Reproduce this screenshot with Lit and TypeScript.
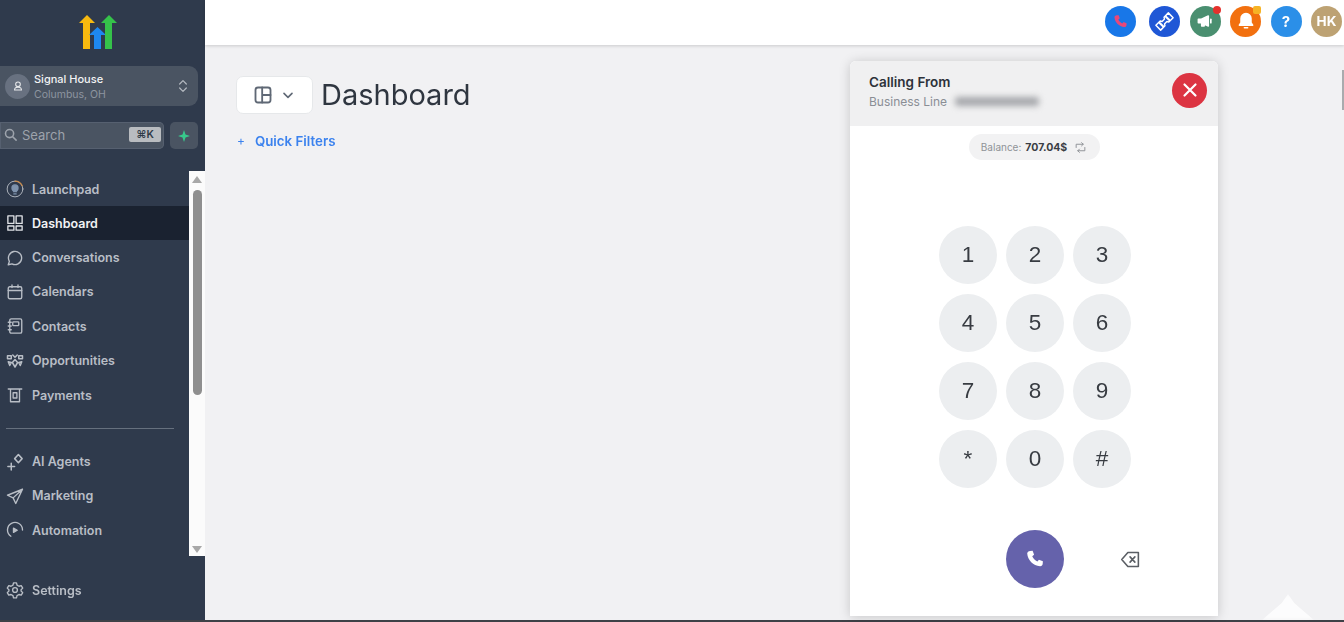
import { LitElement, html, css, svg } from "lit";
import { customElement } from "lit/decorators.js";

const ic = (body: unknown, size = 18) => html`<svg width=${size} height=${size} viewBox="0 0 24 24" fill="none" stroke="currentColor" stroke-width="1.8" stroke-linecap="round" stroke-linejoin="round">${body}</svg>`;

const PHONE = "M6.6 3.2 9.4 3l1.6 4.4-2 1.6c.9 2.4 3 4.600 5.600 5.800l1.700-2 4.300 1.700-.2 2.800c-.1 1.500-1.300 2.700-2.900 2.600C10 19.300 4.100 13.400 3.500 6.100 3.400 4.600 5.100 3.300 6.600 3.200Z";

const navIcons: Record<string, unknown> = {
  Launchpad: svg`<circle cx="12" cy="12" r="10.500" stroke-width="1.200"/><path d="M12 1.500a10.500 10.500 0 0 1 9.500 6" stroke="#c98a4a" stroke-width="1.600"/><circle cx="12" cy="10.500" r="4" fill="#7f93ad" stroke="#7f93ad"/><path d="M10 15.500h4M10.500 18.500h3" stroke="#7f93ad"/>`,
  Dashboard: svg`<rect x="2.500" y="2.500" width="8" height="10"/><rect x="13.500" y="2.500" width="8" height="10"/><rect x="2.500" y="16" width="8" height="5.500"/><rect x="13.500" y="16" width="8" height="5.500"/>`,
  Conversations: svg`<path d="M3 21l1.500-4.500A8.800 8.800 0 1 1 8 19.800Z"/>`,
  Calendars: svg`<rect x="3" y="5" width="18" height="16" rx="2"/><path d="M3 10h18M8 2.500V6M16 2.500V6"/>`,
  Contacts: svg`<rect x="5" y="2.500" width="16" height="19" rx="2"/><rect x="9" y="6.500" width="8" height="5" rx="1"/><path d="M3 7h4M3 12h4M3 17h4"/>`,
  Opportunities: svg`<path d="M2 5h5v4H2zM17 5h5v4h-5zM9 4l3 3 3-3M12 10l3.500 4-3.500 6-3.500-6ZM3 13l4 1-2 4ZM21 13l-4 1 2 4Z" stroke-width="2"/>`,
  Payments: svg`<path d="M3 4h18M6 4v17h12V4"/><rect x="9.500" y="9" width="5" height="7"/>`,
  "AI Agents": svg`<path d="M16.500 2l5 5.500-5 5.500-5-5.500ZM7 13.500v9M2.500 18h9" stroke-width="2"/>`,
  Marketing: svg`<path d="M22 3 2 11l7.500 3.500L13 22ZM22 3 9.500 14.500"/>`,
  Automation: svg`<path d="M6.500 20.300A10 10 0 1 1 22 12"/><path d="M10 9.500l5 2.800-5 2.800Z" fill="currentColor"/>`,
  Settings: svg`<circle cx="12" cy="12" r="3.200"/><path d="M10 2.500h4l.7 3 2.600 1.500 3-.9 2 3.400-2.200 2.100v1.800l2.200 2.100-2 3.400-3-.9-2.600 1.500-.7 3h-4l-.7-3-2.600-1.500-3 .9-2-3.400 2.200-2.100v-1.800L1.700 9.500l2-3.400 3 .9L9.300 5.500Z"/>`,
};

@customElement("app-root")
export class AppRoot extends LitElement {
  static styles = css`
    :host { display: block; width: 1344px; height: 622px; overflow: hidden; font-family: Inter, "Liberation Sans", sans-serif; }
    * { box-sizing: border-box; }
    .app { position: relative; display: flex; width: 100%; height: 622px; background: #f1f1f3; border-bottom: 2px solid #3e4147; filter: blur(.35px); }
    .side { width: 205px; flex: none; background: #2f3a4c; display: flex; flex-direction: column; color: #c4c8cf; }
    .logo { height: 66px; padding: 15px 0 0 79px; flex: none; }
    .loc { height: 40px; width: 198px; flex: none; border-radius: 0 9px 9px 0; background: #4a5462; display: flex; align-items: center; padding: 0 7px 0 5px; gap: 4px; }
    .av { width: 25px; height: 25px; border-radius: 50%; background: #687180; color: #e6e8ea; display: flex; align-items: center; justify-content: center; }
    .loctext { flex: 1; display: flex; flex-direction: column; gap: 2px; margin-top: 2px; }
    .ln { font-size: 11px; font-weight: 500; color: #f2f3f4; line-height: 14px; }
    .ls { font-size: 10.500px; color: #8d95a0; line-height: 14px; }
    .updown { display: flex; color: #b5bac1; }
    .srow { display: flex; gap: 6px; margin-top: 16px; height: 27px; flex: none; }
    .search { width: 164px; background: #4a5462; border-radius: 0 5px 5px 0; display: flex; align-items: center; padding: 0 3px 2px 3px; gap: 4px; color: #9da3ac; font-size: 13px; box-shadow: inset 0 0 0 1px #566070; }
    .stext { flex: 1; }
    .kbd { width: 32px; text-align: center; background: #b9bcc0; color: #2f3a48; font-size: 10.500px; font-weight: 600; padding: 1px 0; border-radius: 2px; line-height: 13px; }
    .plus { width: 28px; background: #4a5462; border-radius: 5px; display: flex; align-items: center; justify-content: center; }
    .navwrap { display: flex; margin-top: 22px; height: 385px; flex: none; }
    .nav { width: 189px; flex: none; padding-top: 1px; }
    .item { height: 34.400px; display: flex; align-items: center; gap: 8px; padding-left: 6px; font-size: 12.500px; font-weight: 600; color: #b9bec6; }
    .item svg { flex: none; }
    .item.on { background: #1a2230; color: #f1f2f4; height: 34px; }
    .item.on svg { color: #dfe2e6; }
    .div { height: 32px; display: flex; align-items: center; padding-left: 6px; padding-top: 1px; }
    .div i { display: block; width: 168px; height: 1px; background: #66707e; }
    .sb { width: 16px; flex: none; background: #fbfbfb; display: flex; flex-direction: column; align-items: center; padding-top: 5px; }
    .tri-u { width: 0; height: 0; border: 5.500px solid transparent; border-top: 0; border-bottom: 7px solid #a8a8a8; }
    .tri-d { width: 0; height: 0; border: 5.500px solid transparent; border-bottom: 0; border-top: 7px solid #a8a8a8; margin-top: auto; margin-bottom: 3px; }
    .thumb { width: 9px; height: 205px; background: #8f8f8f; border-radius: 5px; margin-top: 7px; }
    .set { margin-top: 17px; }
    .main { flex: 1; display: flex; flex-direction: column; min-width: 0; }
    .top { height: 45px; flex: none; background: #fff; box-shadow: 0 1px 3px rgba(0,0,0,.16); display: flex; align-items: center; justify-content: flex-end; gap: 9.500px; padding: 0 2px 3px 0; }
    .tb { position: relative; width: 31px; height: 31px; border-radius: 50%; display: flex; align-items: center; justify-content: center; color: #fff; flex: none; font-weight: 700; }
    .tk { margin-left: 3.500px; }
    .dot { position: absolute; top: 0; right: 0; width: 8px; height: 8px; border-radius: 50%; background: #e5322d; }
    .dot.y { background: #f6b325; border-radius: 2px; }
    .content { padding: 31px 31px; flex: 1; }
    .head { display: flex; align-items: center; gap: 8px; }
    .pick { width: 77px; height: 38px; background: #fff; border: 1px solid #e6e8ea; border-radius: 7px; display: flex; align-items: center; justify-content: center; gap: 7px; color: #5f6875; }
    h1 { margin: 0; font-size: 29px; font-weight: 400; color: #2f3640; line-height: 38px; }
    .qf { margin-top: 18px; display: flex; align-items: center; gap: 10px; padding-left: 1px; color: #3b82ee; font-size: 13.300px; font-weight: 600; line-height: 18px; }
    .qf span:first-child { font-weight: 400; font-size: 12px; }
    .panel { position: absolute; left: 850px; top: 61px; width: 368px; height: 555px; background: #fff; border-radius: 6px 6px 0 0; box-shadow: 0 1px 12px rgba(0,0,0,.18); display: flex; flex-direction: column; align-items: center; }
    .ph { width: 100%; height: 65px; flex: none; background: #f0f0f1; border-radius: 6px 6px 0 0; display: flex; align-items: center; justify-content: space-between; padding: 0 11px 3px 19px; }
    .close { margin-bottom: 4px; }
    .cf { font-size: 13.500px; font-weight: 600; color: #2d323a; line-height: 19px; }
    .bl { display: flex; align-items: center; gap: 7px; font-size: 12px; color: #8a8e95; line-height: 19px; }
    .blur { width: 84px; height: 9px; background: #a4a6aa; filter: blur(3px); border-radius: 3px; margin-left: 1px; }
    .close { width: 35px; height: 35px; border-radius: 50%; background: #dc3442; color: #fff; display: flex; align-items: center; justify-content: center; }
    .bal { margin-top: 8px; height: 26px; width: 131px; flex: none; border-radius: 13px; background: #f2f2f3; display: flex; align-items: center; justify-content: center; gap: 4px; font-size: 10px; color: #8f9297; }
    .bal b { font-size: 10.500px; font-weight: 700; color: #3a3e45; margin-right: 3px; }
    .pad { margin: 66px 0 0 2px; display: grid; grid-template-columns: repeat(3, 58px); gap: 10px 9px; }
    .key { width: 58px; height: 58px; border-radius: 50%; background: #eceef0; display: flex; align-items: center; justify-content: center; font-size: 22.500px; color: #383c42; font-family: "Liberation Sans", Arial, sans-serif; }
    .acts { margin-top: 42px; width: 100%; padding-left: 2px; display: grid; grid-template-columns: 1fr 58px 1fr; align-items: center; }
    .call { grid-column: 2; width: 58px; height: 58px; border-radius: 50%; background: #6562ab; color: #fff; display: flex; align-items: center; justify-content: center; }
    .del { padding-left: 56px; color: #5a5e64; display: flex; }
    .bump { position: absolute; left: 1262px; top: 594px; width: 52px; height: 26px; background: #fff; clip-path: polygon(50% 0, 62% 35%, 100% 100%, 0 100%, 38% 35%); filter: blur(2px); opacity: .8; }
    .rsb { position: absolute; right: 0; top: 70px; width: 2px; height: 40px; background: #a9abae; }
  `;

  private item(n: string, label = n, cls = "") {
    return html`<div class="item ${n === "Dashboard" ? "on" : ""} ${cls}">${ic(navIcons[n], 18)}<span>${label}</span></div>`;
  }

  render() {
    const keys = ["1","2","3","4","5","6","7","8","9","*","0","#"];
    return html`<div class="app">
      <aside class="side">
        <div class="logo">
          <svg width="38" height="34" viewBox="0 0 38 34">
            <path d="M4 34V8H0L8 0l8 8h-5V34Z" fill="#f7b90f"/>
            <path d="M15 34V20H10l8.500-8L27 20H22V34Z" fill="#1e88ef"/>
            <path d="M26 34V8H22L30 0l8 8H33V34Z" fill="#35c24a"/>
          </svg>
        </div>
        <div class="loc">
          <div class="av">${ic(svg`<circle cx="12" cy="9" r="4"/><path d="M6 19c0-3 2-5 6-5s6 2 6 5Z"/>`, 14)}</div>
          <div class="loctext"><div class="ln">Signal House</div><div class="ls">Columbus, OH</div></div>
          <div class="updown">${ic(svg`<path d="M7 9l5-5 5 5M7 15l5 5 5-5"/>`, 16)}</div>
        </div>
        <div class="srow">
          <div class="search">${ic(svg`<circle cx="10.500" cy="10.500" r="6.500" stroke-width="2.500"/><path d="M15.500 15.500 21 21" stroke-width="2.500"/>`, 15)}<span class="stext">Search</span><span class="kbd">⌘K</span></div>
          <div class="plus"><svg width="12" height="12" viewBox="0 0 12 12"><path d="M6 0 7.500 4.500 12 6 7.500 7.500 6 12 4.500 7.500 0 6 4.500 4.500Z" fill="#37c98b"/></svg></div>
        </div>
        <div class="navwrap">
          <div class="nav">
            ${["Launchpad","Dashboard","Conversations","Calendars","Contacts","Opportunities","Payments"].map((n) => this.item(n))}
            <div class="div"><i></i></div>
            ${["AI Agents","Marketing","Automation"].map((n) => this.item(n))}
          </div>
          <div class="sb"><div class="tri-u"></div><div class="thumb"></div><div class="tri-d"></div></div>
        </div>
        ${this.item("Settings", "Settings", "set")}
      </aside>
      <main class="main">
        <div class="top">
          <div class="tb" style="background:#1877e8;color:#e8487a">${ic(svg`<path d=${PHONE} fill="currentColor" stroke="none"/>`, 17)}</div>
          <div class="tb tk" style="background:#1f57d6">${ic(svg`<path d="M3 16 7.500 11.500 9.500 12 12 9.500 11.500 7.500 16 3 21 8 16.500 12.500 14.500 12 12 14.500 12.500 16.500 8 21Z" stroke-width="1.500"/><path d="M7 13.500l3.500 3.500M13.500 7l3.500 3.500" stroke-width="2.200"/>`, 23)}</div>
          <div class="tb" style="background:#4a8f70">${ic(svg`<path d="M4 10h3l9-4v12l-9-4H4ZM8 14v4h3v-3" fill="currentColor"/><path d="M19 10v4" stroke-width="2"/>`, 20)}<span class="dot"></span></div>
          <div class="tb" style="background:#f2700f">${ic(svg`<path d="M12 3a6 6 0 0 0-6 6v5l-2 3h16l-2-3V9a6 6 0 0 0-6-6ZM10 20h4" fill="currentColor"/>`, 20)}<span class="dot y"></span></div>
          <div class="tb" style="background:#2b8fe8;font-size:15px">?</div>
          <div class="tb" style="background:#bda273;font-size:13.500px">HK</div>
        </div>
        <div class="content">
          <div class="head">
            <div class="pick">
              ${ic(svg`<rect x="3" y="3" width="18" height="18" rx="3" stroke-width="2.200"/><path d="M11 3v18M11 12h10" stroke-width="2.200"/>`, 20)}
              ${ic(svg`<path d="M6 9.500l6 6 6-6" stroke-width="2.400"/>`, 16)}
            </div>
            <h1>Dashboard</h1>
          </div>
          <div class="qf"><span>+</span><span>Quick Filters</span></div>
        </div>
      </main>
      <section class="panel">
        <div class="ph">
          <div>
            <div class="cf">Calling From</div>
            <div class="bl"><span>Business Line</span><span class="blur"></span></div>
          </div>
          <div class="close">${ic(svg`<path d="M6 6l12 12M18 6 6 18" stroke-width="2.400"/>`, 22)}</div>
        </div>
        <div class="bal"><span>Balance:</span><b>707.04$</b>${ic(svg`<path d="M4 12V6h13M20 12v6H7M14 3l3 3-3 3M10 21l-3-3 3-3"/>`, 13)}</div>
        <div class="pad">${keys.map((k) => html`<div class="key">${k}</div>`)}</div>
        <div class="acts">
          <div class="call">${ic(svg`<path d=${PHONE} fill="currentColor" stroke="none"/>`, 22)}</div>
          <div class="del">${ic(svg`<path d="M9 4h12v16H9l-7-8ZM11.500 9l5.500 6M17 9l-5.500 6"/>`, 21)}</div>
        </div>
      </section>
      <div class="bump"></div>
      <div class="rsb"></div>
    </div>`;
  }
}
